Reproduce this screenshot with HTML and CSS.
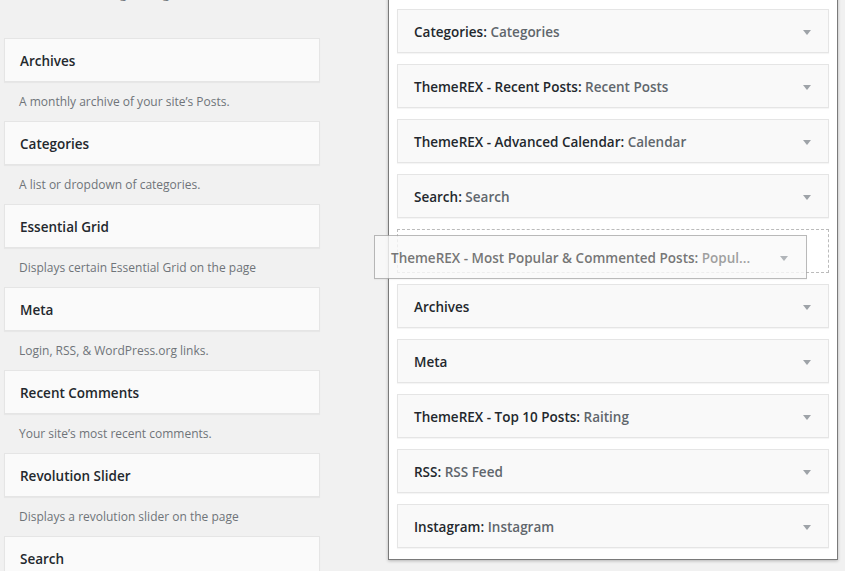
FILE: index.html
```html
<!DOCTYPE html>
<html>
<head>
<meta charset="utf-8">
<link rel="stylesheet" href="styles.css">
</head>
<body>
<div class="page">
  <div class="available">
    <p class="intro">To activate a widget drag it to a sidebar or click on it. To deactivate a widget drag it back.</p>
    <div class="item"><div class="card">Archives</div><p class="desc">A monthly archive of your site’s Posts.</p></div>
    <div class="item"><div class="card">Categories</div><p class="desc">A list or dropdown of categories.</p></div>
    <div class="item"><div class="card">Essential Grid</div><p class="desc">Displays certain Essential Grid on the page</p></div>
    <div class="item"><div class="card">Meta</div><p class="desc">Login, RSS, &amp; WordPress.org links.</p></div>
    <div class="item"><div class="card">Recent Comments</div><p class="desc">Your site’s most recent comments.</p></div>
    <div class="item"><div class="card">Revolution Slider</div><p class="desc">Displays a revolution slider on the page</p></div>
    <div class="item"><div class="card">Search</div><p class="desc">A search form for your site.</p></div>
  </div>
  <div class="sidebar">
    <div class="widget"><span class="t">Categories:</span>&nbsp;<span class="sub">Categories</span><i class="arrow"></i></div>
    <div class="widget"><span class="t">ThemeREX - Recent Posts:</span>&nbsp;<span class="sub">Recent Posts</span><i class="arrow"></i></div>
    <div class="widget"><span class="t">ThemeREX - Advanced Calendar:</span>&nbsp;<span class="sub">Calendar</span><i class="arrow"></i></div>
    <div class="widget"><span class="t">Search:</span>&nbsp;<span class="sub">Search</span><i class="arrow"></i></div>
    <div class="placeholder">
      <div class="widget dragging"><span class="t">ThemeREX - Most Popular &amp; Commented Posts:</span>&nbsp;<span class="sub">Popul...</span><i class="arrow"></i></div>
    </div>
    <div class="widget"><span class="t">Archives</span><i class="arrow"></i></div>
    <div class="widget"><span class="t">Meta</span><i class="arrow"></i></div>
    <div class="widget"><span class="t">ThemeREX - Top 10 Posts:</span>&nbsp;<span class="sub">Raiting</span><i class="arrow"></i></div>
    <div class="widget"><span class="t">RSS:</span>&nbsp;<span class="sub">RSS Feed</span><i class="arrow"></i></div>
    <div class="widget"><span class="t">Instagram:</span>&nbsp;<span class="sub">Instagram</span><i class="arrow"></i></div>
  </div>
</div>
</body>
</html>
```
FILE: styles.css
```css
html, body {
  margin: 0;
  padding: 0;
  background: #f1f1f1;
  font-family: "Open Sans", "Noto Sans", sans-serif;
  font-size: 13px;
  color: #23282d;
  overflow: hidden;
  height: 571px;
}
.page {
  display: flex;
  align-items: flex-start;
}
.available {
  width: 316px;
  margin-left: 4px;
}
.intro {
  margin: -15px 0 0 0;
  padding: 0 15px;
  height: 53px;
  line-height: 17px;
  white-space: nowrap;
  overflow: hidden;
  color: #72777c;
}
.card {
  background: #fafafa;
  border: 1px solid #e5e5e5;
  box-shadow: 0 1px 1px rgba(0,0,0,.04);
  padding: 14px 15px 12px;
  line-height: 16px;
  font-size: 13.5px;
  font-weight: 600;
  color: #23282d;
}
.desc {
  margin: 0;
  padding: 11px 15px;
  line-height: 17px;
  font-size: 12px;
  color: #6f7479;
}
.sidebar {
  margin-left: 68px;
  margin-top: -10px;
  width: 432px;
  padding: 18px 8px 11px;
  background: #fff;
  border: 1px solid #7a7a7a;
  box-shadow: 0 1px 3px rgba(0,0,0,.25);
  display: flex;
  flex-direction: column;
  gap: 11px;
}
.widget {
  position: relative;
  background: #f9f9f9;
  border: 1px solid #e5e5e5;
  box-shadow: 0 1px 1px rgba(0,0,0,.04);
  padding: 14px 40px 12px 16px;
  line-height: 16px;
  font-size: 13.5px;
  font-weight: 600;
  white-space: nowrap;
}
.t { color: #23282d; }
.sub { color: #60666c; }
.arrow {
  position: absolute;
  right: 17px;
  top: 20px;
  width: 0;
  height: 0;
  border-left: 4px solid transparent;
  border-right: 4px solid transparent;
  border-top: 5px solid #9ea3a8;
}
.placeholder {
  position: relative;
  height: 42px;
  border: 1px dashed #bbb;
}
.widget.dragging {
  position: absolute;
  left: -24px;
  top: 5px;
  width: 375px;
  border-color: #a8a8a8;
  padding-left: 16px;
  opacity: .8;
  background: #fafafa;
}
.widget.dragging .t { color: #555; }
.widget.dragging .sub { color: #888; }
.widget.dragging .arrow { right: 18px; }
```
